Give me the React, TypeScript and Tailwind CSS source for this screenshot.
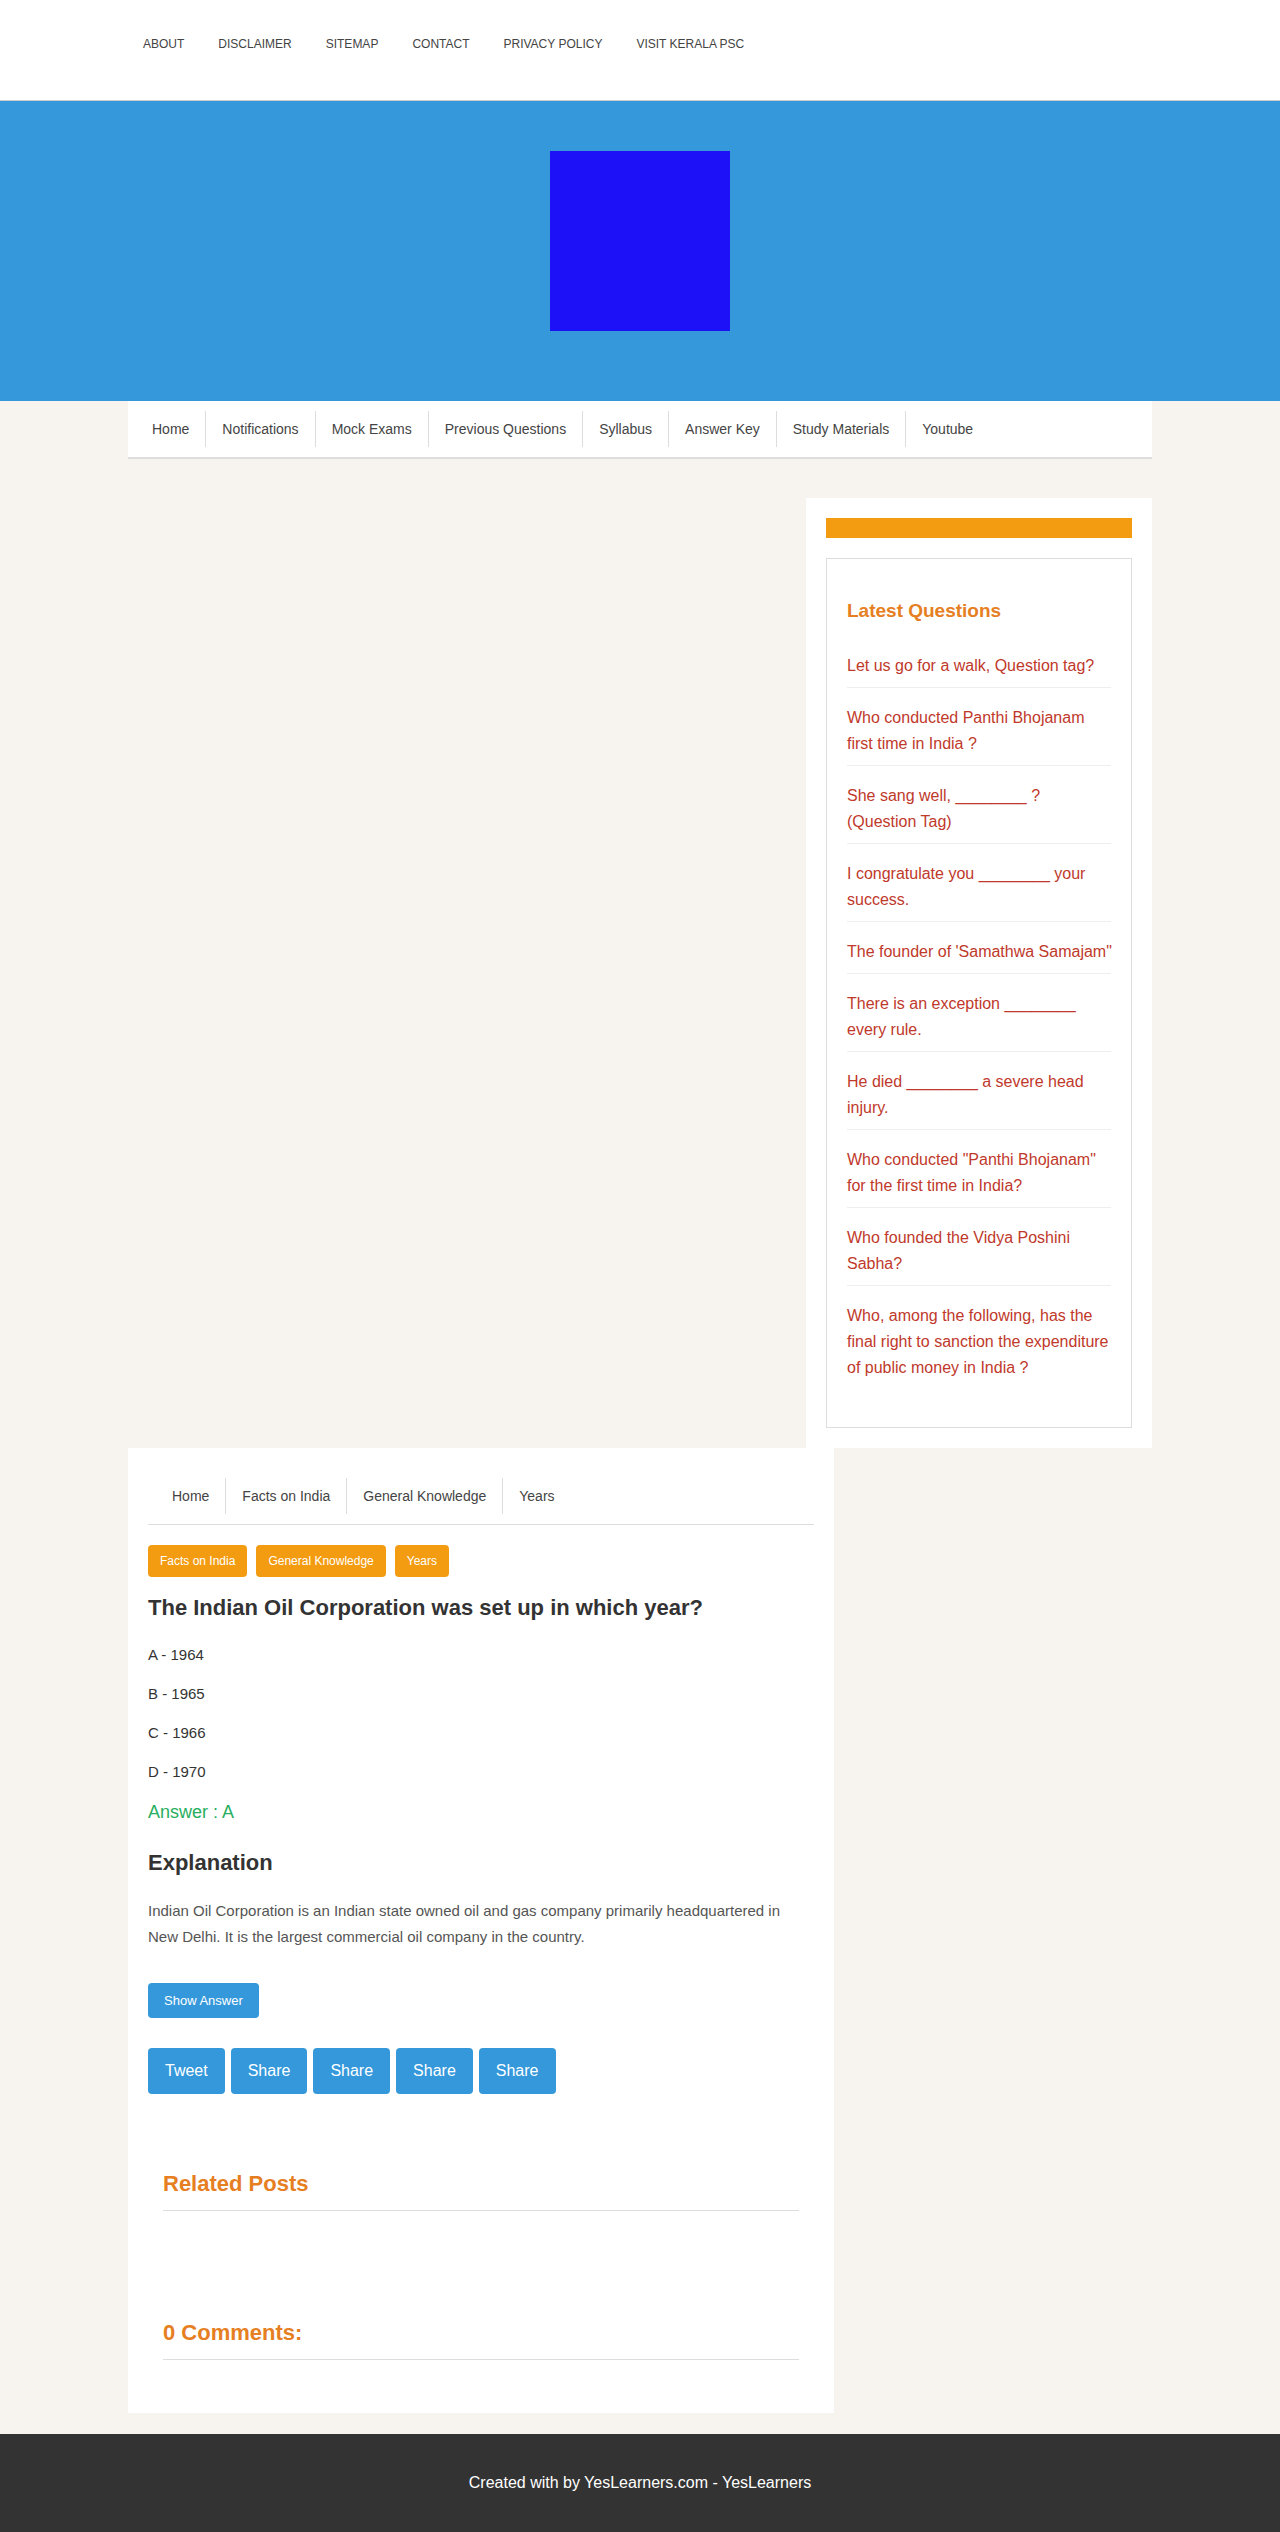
import * as React from 'react';

const topLinks = ['ABOUT', 'DISCLAIMER', 'SITEMAP', 'CONTACT', 'PRIVACY POLICY', 'VISIT KERALA PSC'];
const mainNav = ['Home', 'Notifications', 'Mock Exams', 'Previous Questions', 'Syllabus', 'Answer Key', 'Study Materials', 'Youtube'];
const crumbs = ['Home', 'Facts on India', 'General Knowledge', 'Years'];
const tags = ['Facts on India', 'General Knowledge', 'Years'];
const options = ['A - 1964', 'B - 1965', 'C - 1966', 'D - 1970'];
const shareButtons = ['Tweet', 'Share', 'Share', 'Share', 'Share'];

const latest = [
  'Let us go for a walk, Question tag?',
  'Who conducted Panthi Bhojanam first time in India ?',
  'She sang well, ________ ? (Question Tag)',
  'I congratulate you ________ your success.',
  "The founder of 'Samathwa Samajam\"",
  'There is an exception ________ every rule.',
  'He died ________ a severe head injury.',
  'Who conducted "Panthi Bhojanam" for the first time in India?',
  'Who founded the Vidya Poshini Sabha?',
  'Who, among the following, has the final right to sanction the expenditure of public money in India ?',
];

const MenuList: React.FC<{ items: string[] }> = ({ items }) => (
  <ul className="flex pl-2">
    {items.map((item, i) => (
      <li
        key={item}
        className={`px-4 leading-[36px] text-[14px] text-[#444] ${
          i < items.length - 1 ? 'border-r border-[#ddd]' : ''
        }`}
      >
        {item}
      </li>
    ))}
  </ul>
);

export default function App() {
  return (
    <div className="min-h-[2532px] bg-[#f7f4ef] font-['Liberation_Sans',Arial,sans-serif]">
      {/* top bar */}
      <header className="h-[101px] bg-white border-b border-[#ccc]">
        <nav className="w-[1024px] mx-auto pl-[15px] pt-[36px] flex gap-[34px]">
          {topLinks.map((l) => (
            <a key={l} className="text-[12px] leading-[16px] text-[#444]">
              {l}
            </a>
          ))}
        </nav>
      </header>

      {/* banner */}
      <div className="h-[300px] bg-[#3498db] flex justify-center pt-[50px]">
        <div className="w-[180px] h-[180px] bg-[#1d11f7]" />
      </div>

      <div className="w-[1024px] mx-auto">
        <div className="bg-white py-[10px] border-b-2 border-[#ddd]">
          <MenuList items={mainNav} />
        </div>

        {/* sidebar */}
        <div className="flex justify-end mt-[39px]">
          <aside className="w-[346px] bg-white p-5">
            <div className="h-5 bg-[#f39c12]" />
            <div className="mt-5 border border-[#ddd] px-5 pt-10 pb-[38px]">
              <h2 className="text-[19px] leading-[24px] font-bold text-[#e67e22]">Latest Questions</h2>
              <ul className="mt-[13px]">
                {latest.map((q, i) => (
                  <li
                    key={q}
                    className={`pt-[17px] pb-[8px] text-[16px] leading-[26px] text-[#c0392b] ${
                      i < latest.length - 1 ? 'border-b border-[#eee]' : ''
                    } ${i === 4 ? 'whitespace-nowrap' : ''}`}
                  >
                    {q}
                  </li>
                ))}
              </ul>
            </div>
          </aside>
        </div>

        {/* post */}
        <main className="w-[706px] bg-white px-5 pt-5 pb-[53px]">
          <div className="pt-[10px] pb-[10px] border-b border-[#ddd]">
            <MenuList items={crumbs} />
          </div>

          <div className="flex gap-[9px] mt-5">
            {tags.map((t) => (
              <span
                key={t}
                className="h-8 px-3 flex items-center rounded-[4px] bg-[#f39c12] text-white text-[12px]"
              >
                {t}
              </span>
            ))}
          </div>

          <h1 className="mt-[17px] text-[22px] leading-[28px] font-bold text-[#333]">
            The Indian Oil Corporation was set up in which year?
          </h1>

          <div className="mt-[21px] flex flex-col gap-[15px]">
            {options.map((o) => (
              <p key={o} className="text-[15px] leading-[24px] text-[#333]">
                {o}
              </p>
            ))}
          </div>

          <p className="mt-[16px] text-[18px] leading-[24px] text-[#27ae60]">Answer : A</p>

          <h2 className="mt-[25px] text-[22px] leading-[28px] font-bold text-[#333]">Explanation</h2>

          <p className="mt-[21px] max-w-[650px] text-[15px] leading-[26px] text-[#555]">
            Indian Oil Corporation is an Indian state owned oil and gas company primarily headquartered in New
            Delhi. It is the largest commercial oil company in the country.
          </p>

          <button className="mt-[33px] h-[35px] px-4 rounded-[4px] bg-[#3498db] text-white text-[13px]">
            Show Answer
          </button>

          <div className="mt-[30px] flex gap-[6px]">
            {shareButtons.map((s, i) => (
              <button
                key={i}
                className="h-[46px] px-[17px] rounded-[4px] bg-[#3498db] text-white text-[16px]"
              >
                {s}
              </button>
            ))}
          </div>

          <div className="mx-[15px] mt-[76px]">
            <h3 className="text-[22px] leading-[28px] font-bold text-[#e67e22] pb-3 border-b border-[#ddd]">
              Related Posts
            </h3>
            <h3 className="mt-[108px] text-[22px] leading-[28px] font-bold text-[#e67e22] pb-3 border-b border-[#ddd]">
              0 Comments:
            </h3>
          </div>
        </main>
      </div>

      <footer className="mt-[21px] h-[98px] bg-[#333] flex items-center justify-center">
        <p className="text-white text-[16px]">Created with by YesLearners.com - YesLearners</p>
      </footer>
    </div>
  );
}
